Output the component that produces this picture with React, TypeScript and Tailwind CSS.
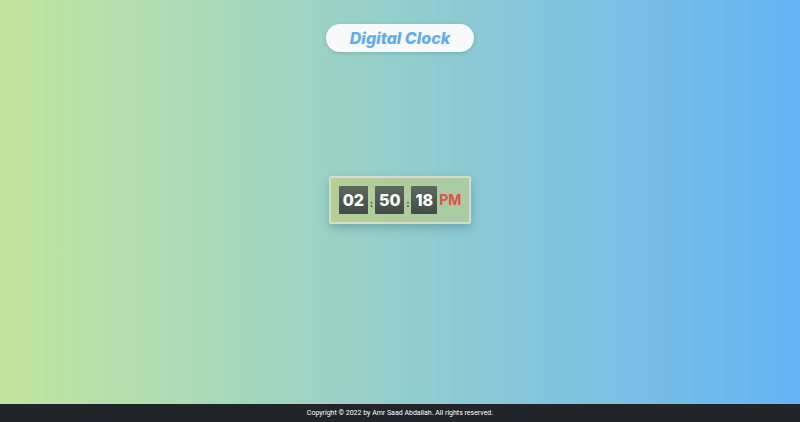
const digitClass =
  "flex h-7 items-center rounded-[1px] bg-linear-to-b from-[#5c695f] to-[#414c44] px-1 text-base font-extrabold text-white";

function Separator() {
  return <span className="w-[7px] pt-1.5 text-center text-[10px] font-bold text-[#3f4b3e]">:</span>;
}

function Clock() {
  return (
    <time
      dateTime="14:50:18"
      className="flex h-12 items-center rounded-xs border-2 border-[#d3ded0] bg-linear-to-r from-[#b3cf92] to-[#a9cba4] px-2 shadow-[0_4px_10px_rgba(40,80,100,0.3)]"
    >
      <span className={digitClass}>02</span>
      <Separator />
      <span className={digitClass}>50</span>
      <Separator />
      <span className={digitClass}>18</span>
      <span className="ml-0.5 text-sm font-bold text-[#d9534f]">PM</span>
    </time>
  );
}

export default function App() {
  return (
    <div className="flex min-h-screen flex-col bg-linear-to-r from-[#c2e59c] to-[#64b3f4] font-['Inter','Liberation_Sans',sans-serif]">
      <header className="flex justify-center pt-6">
        <h1 className="rounded-full bg-[#f8f9fa] px-6 text-base leading-7 font-extrabold text-[#62ade9] italic shadow-[0_1px_4px_rgba(0,0,0,0.15)]">
          Digital Clock
        </h1>
      </header>
      <main className="flex flex-1 items-center justify-center pb-14">
        <Clock />
      </main>
      <footer className="bg-[#212529] text-center font-['Roboto','Liberation_Sans',sans-serif] text-[7px] leading-[18px] text-white">
        Copyright © 2022 by Amr Saad Abdallah. All rights reserved.
      </footer>
    </div>
  );
}
